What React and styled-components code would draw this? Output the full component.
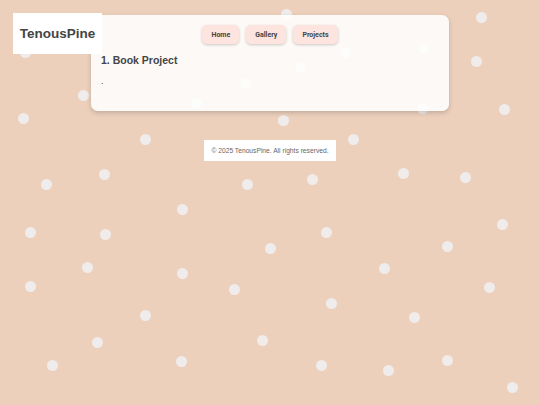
import styled, { createGlobalStyle } from 'styled-components';

const GlobalStyle = createGlobalStyle`
	html, body {
		margin: 0;
		padding: 0;
		background-color: #ecd0bc;
		font-family: "Liberation Sans", Arial, sans-serif;
		color: #444;
	}
`;

const Page = styled.div`
	position: relative;
	width: 540px;
	height: 405px;
	overflow: hidden;
	padding-top: 15px;
	box-sizing: border-box;
`;

const Dot = styled.span`
	position: absolute;
	width: 11px;
	height: 11px;
	margin: -5.5px 0 0 -5.5px;
	border-radius: 50%;
	background-color: #efeceb;
`;

const Logo = styled.div`
	position: absolute;
	top: 13px;
	left: 13px;
	z-index: 3;
	width: 89px;
	height: 41px;
	display: flex;
	align-items: center;
	justify-content: center;
	background-color: #fff;
	font-size: 13.5px;
	font-weight: 700;
	color: #444;
`;

const Card = styled.main`
	position: relative;
	z-index: 2;
	width: 358px;
	height: 96px;
	margin: 0 auto;
	padding: 10px;
	box-sizing: border-box;
	background-color: rgba(255, 255, 255, 0.86);
	border-radius: 7px;
	box-shadow: 0 2px 5px rgba(0, 0, 0, 0.18);
`;

const Nav = styled.nav`
	display: flex;
	justify-content: center;
	gap: 7px;
`;

const NavButton = styled.button`
	height: 19px;
	padding: 0 9px;
	border: none;
	border-radius: 5px;
	background-color: #fde4df;
	box-shadow: 0 1px 3px rgba(0, 0, 0, 0.2);
	font-family: Roboto, "Liberation Sans", sans-serif;
	font-size: 7px;
	font-weight: 700;
	color: #444;
	cursor: pointer;
`;

const Heading = styled.h2`
	margin: 10px 0 0;
	font-size: 10.5px;
	font-weight: 700;
	color: #444;
`;

const Body = styled.p`
	margin: 10px 0 0;
	font-size: 9px;
	color: #444;
`;

const Footer = styled.footer`
	position: relative;
	z-index: 2;
	width: fit-content;
	margin: 29px auto 0;
	padding: 7px 7px;
	background-color: #fff;
	font-size: 6.7px;
	color: #666;
`;

const DOTS = [
	[481, 17], [286, 14], [423, 48], [476, 61], [300, 67], [245, 83], [345, 52],
	[83, 95], [504, 109], [23, 118], [196, 103], [422, 108], [283, 120], [25, 52],
	[145, 139], [353, 139], [104, 174], [46, 184], [247, 184], [312, 179],
	[403, 173], [465, 177], [182, 209], [30, 232], [105, 234], [326, 232],
	[502, 224], [270, 248], [447, 246], [87, 267], [182, 273], [384, 268],
	[30, 286], [234, 289], [489, 287], [331, 303], [145, 315], [414, 317],
	[97, 342], [262, 340], [52, 365], [181, 361], [321, 365], [388, 370],
	[447, 360], [512, 387],
];

const LINKS = ['Home', 'Gallery', 'Projects'];

export default function App() {
	return (
		<>
			<GlobalStyle />
			<Page>
				{DOTS.map(([x, y]) => (
					<Dot key={`${x}-${y}`} style={{ left: x, top: y }} />
				))}
				<Logo>TenousPine</Logo>
				<Card>
					<Nav>
						{LINKS.map((link) => (
							<NavButton key={link}>{link}</NavButton>
						))}
					</Nav>
					<Heading>1. Book Project</Heading>
					<Body>.</Body>
				</Card>
				<Footer>© 2025 TenousPine. All rights reserved.</Footer>
			</Page>
		</>
	);
}
